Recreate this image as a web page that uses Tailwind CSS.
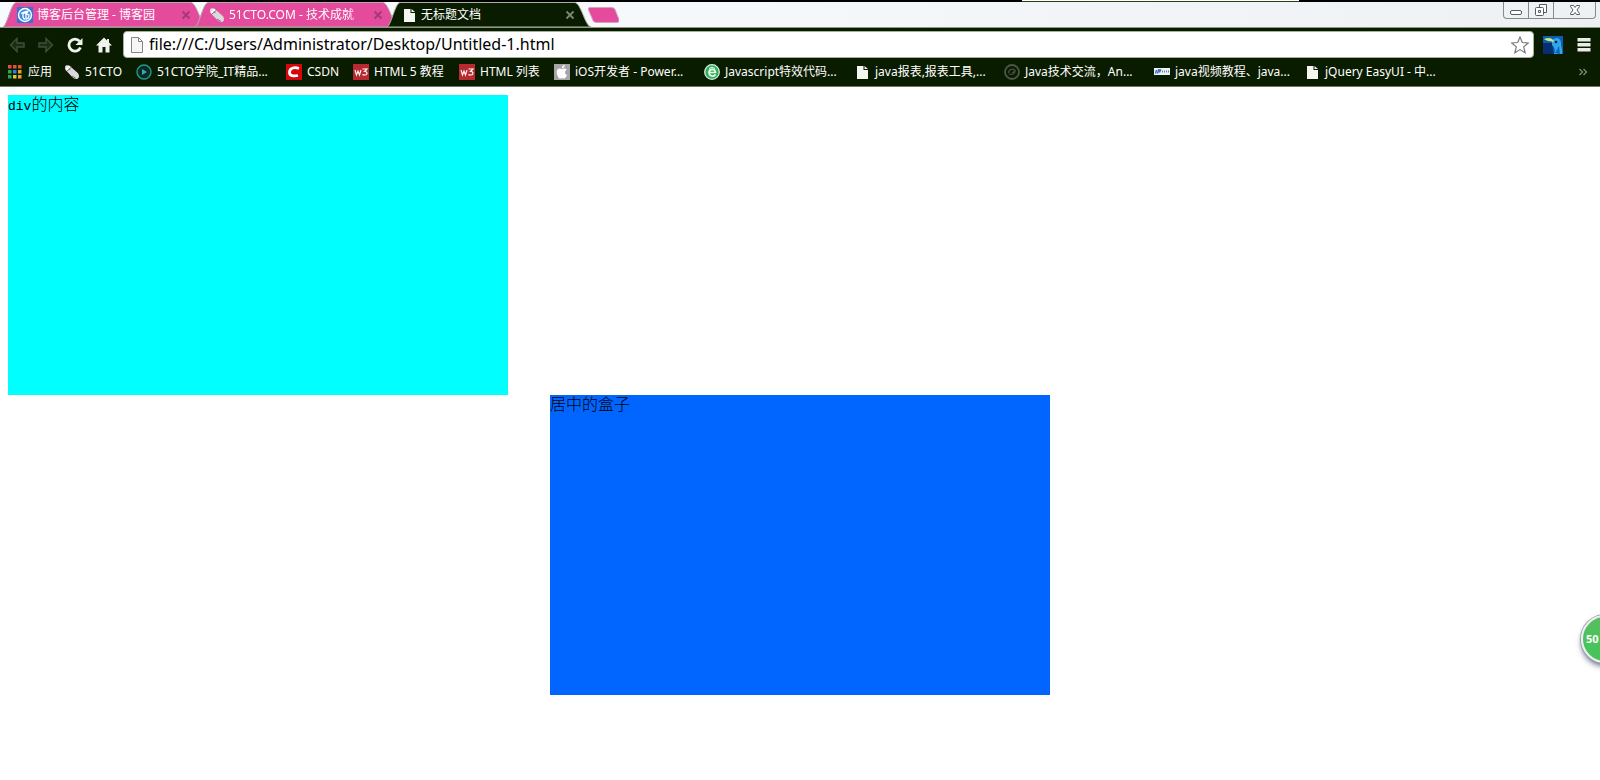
<!DOCTYPE html>
<html lang="zh-CN">
<head>
<meta charset="utf-8">
<title>无标题文档</title>
<script src="https://cdn.jsdelivr.net/npm/@tailwindcss/browser@4"></script>
</head>
<body class="relative min-h-screen overflow-hidden bg-white font-['Noto_Sans','Noto_Sans_CJK_SC',sans-serif] text-xs">
<svg class="hidden">
  <symbol id="file" viewBox="0 0 16 16"><path d="M3 2h6.500v4H14v9H3z" fill="#f4f6f0"/><path d="M10.500 2 14 5h-3.500z" fill="#f4f6f0"/></symbol>
  <symbol id="mouse" viewBox="0 0 16 16"><path d="M1 3c0-2 3-2.500 5-.8l7.500 6.600c2 2 2 5 0 6-1.500.8-3.500 0-5-1.500L2 6.500C1 5.500 1 4 1 3z" fill="#ddd8dc"/><path d="m1.500 5 1.800 2L7 3.300 5 1.600" fill="#fff"/><path d="m3 7 4.500-4M5 4.700l1.500 1.500M8 12l4 2.500" fill="none" stroke="#77716f"/></symbol>
  <symbol id="close" viewBox="0 0 10 10"><path d="m1.500 1.500 7 7m0-7-7 7" fill="none" stroke="currentColor" stroke-width="1.800"/></symbol>
  <symbol id="w3" viewBox="0 0 16 16"><path d="M0 0h16v16H0z" fill="#b92a30"/><path d="m2 6 1.500 5L5 7l1.500 4L8 6M9.500 5H14l-2.500 2.500C15 7.500 14.500 11 12 11c-1 0-2 0-2.500-.5" fill="none" stroke="#fff" stroke-width="1.100"/></symbol>
</svg>

<header>
  <div class="flex h-0.5 bg-black"><div class="ml-[63.9%] w-[17.3%] border-b border-[#23420f] bg-white"></div></div>
  <div class="flex h-[25px] items-start bg-linear-to-r from-[#f8fbfd] via-[#f5f8fb] to-[#eef1f3]">
    <nav class="flex h-full pl-[3px]" aria-label="标签页">
      <div class="relative isolate flex h-full w-[204px] items-center pr-4 pl-3.5 text-white">
        <svg class="absolute inset-0 -z-10 size-full" viewBox="0 0 204 25" preserveAspectRatio="none"><path d="M0 25C4 24 8 1 13 .5h175C194 1 198 24 204 25z" fill="#e44b9d" stroke="#b5a8b2"/></svg>
        <svg class="mr-1 size-4 shrink-0" viewBox="0 0 16 16"><path d="M0 0h16v16H0z" fill="#2f76d2"/><circle cx="8" cy="8" r="6.500" fill="#3f8ce5" stroke="#fff" stroke-width="1.400"/><path d="M4 6.500 7 5l4-1-1 2H6v3c0 2 1 3 2 3m1-6v6c2 0 3-2 3-4L9 7" fill="none" stroke="#fff" stroke-width="1.300"/></svg>
        <span class="min-w-0 flex-1 overflow-hidden whitespace-nowrap">博客后台管理 - 博客园</span>
        <button aria-label="关闭" class="text-[#a03a75]"><svg class="size-2.5"><use href="#close"/></svg></button>
      </div>
      <div class="relative isolate -ml-3 flex h-full w-[204px] items-center pr-4 pl-3.5 text-white">
        <svg class="absolute inset-0 -z-10 size-full" viewBox="0 0 204 25" preserveAspectRatio="none"><path d="M0 25C4 24 8 1 13 .5h175C194 1 198 24 204 25z" fill="#e44b9d" stroke="#b5a8b2"/></svg>
        <svg class="mr-1 size-4 shrink-0"><use href="#mouse"/></svg>
        <span class="mr-1 min-w-0 flex-1 overflow-hidden mask-r-from-85% whitespace-nowrap">51CTO.COM - 技术成就</span>
        <button aria-label="关闭" class="text-[#a03a75]"><svg class="size-2.5"><use href="#close"/></svg></button>
      </div>
      <div class="relative isolate -ml-3 flex h-full w-[204px] items-center pr-4 pl-3.5 text-white">
        <svg class="absolute inset-0 -z-10 size-full" viewBox="0 0 204 25" preserveAspectRatio="none"><path d="M0 25C4 24 8 1 13 .5h175C194 1 198 24 204 25z" fill="#0a1c00" stroke="#a9b3a4"/></svg>
        <svg class="mr-1 size-4 shrink-0"><use href="#file"/></svg>
        <span class="min-w-0 flex-1 overflow-hidden whitespace-nowrap">无标题文档</span>
        <button aria-label="关闭" class="text-[#7d8479]"><svg class="size-2.5"><use href="#close"/></svg></button>
      </div>
      <button aria-label="新标签页" class="-ml-1"><svg class="h-4 w-8" viewBox="0 0 32 16"><path d="M3 .5h22q2 0 3 2l4 10q1 3-2 3H9q-2 0-3-2L1.500 3Q.5.500 3 .5z" fill="#e44b9d" stroke="#d5a5c0"/></svg></button>
    </nav>
    <div class="mr-1 ml-auto flex h-[17px] rounded-b border border-t-0 border-[#858a90] text-[#555b63]">
      <button aria-label="最小化" class="flex w-[25px] justify-center border-r border-[#858a90]"><svg class="h-4 w-3.5" viewBox="0 0 14 16"><rect x="1.500" y="8.500" width="11" height="4" rx="1.500" fill="#fff" stroke="currentColor"/></svg></button>
      <button aria-label="还原" class="flex w-[25px] justify-center border-r border-[#858a90]"><svg class="h-4 w-3.5" viewBox="0 0 14 16"><path d="M5.500 5V2.500h7v8H10" fill="#fff" stroke="currentColor"/><rect x="1.500" y="5.500" width="8" height="8" rx="1" fill="#fff" stroke="currentColor"/><path d="M4.500 8.500h2v2h-2z" fill="none" stroke="currentColor"/></svg></button>
      <button aria-label="关闭窗口" class="flex w-[41px] justify-center"><svg class="h-4 w-3.5" viewBox="0 0 14 16"><path d="M2.500 3.500h3L7 5.500l1.500-2h3v1L9 8l2.500 3.500v1h-3L7 10.500l-1.500 2h-3v-1L5 8 2.500 4.500z" fill="#fff" stroke="currentColor"/></svg></button>
    </div>
  </div>

  <div class="border-t border-[#8d9887] bg-[#0a1c00] text-white">
    <div class="flex items-center gap-[13px] pt-[3px] pl-[9px] pr-2">
      <button aria-label="后退" class="text-[#3f4d38]"><svg class="size-4" viewBox="0 0 16 16"><path d="M8 1.500 1.500 8 8 14.500V10h7V6H8z" fill="#1d2d14" stroke="currentColor" stroke-width="1.500"/></svg></button>
      <button aria-label="前进" class="text-[#3f4d38]"><svg class="size-4" viewBox="0 0 16 16"><path d="M8 1.500 14.500 8 8 14.500V10H1V6h7z" fill="#1d2d14" stroke="currentColor" stroke-width="1.500"/></svg></button>
      <button aria-label="重新加载"><svg class="size-4" viewBox="0 0 16 16"><path d="M12.500 4.200A6 6 0 1 0 13.500 10.500" fill="none" stroke="#f0f3ed" stroke-width="2.800"/><path d="M15.500 1v7H8.500z" fill="#f0f3ed"/></svg></button>
      <button aria-label="主页"><svg class="size-4" viewBox="0 0 16 16"><path d="M8 .5 0 8.500h2.500v7h4V10h3v5.500h4v-7H16l-3-3V2h-2v1.500z" fill="#f0f3ed"/></svg></button>
      <div class="-ml-0.5 flex h-[27px] min-w-0 flex-1 items-center rounded-sm border border-[#a3b09b] bg-white pr-1 pl-[5px]">
        <svg class="size-4 shrink-0" viewBox="0 0 16 16"><path d="M2.500.5h7l4 4v11h-11zM9.500.5v4h4" fill="#f6f6f6" stroke="#858585"/></svg>
        <input aria-label="地址" value="file:///C:/Users/Administrator/Desktop/Untitled-1.html" class="ml-1 h-6 min-w-0 flex-1 bg-transparent pb-0.5 text-base text-black outline-none">
        <button aria-label="添加书签"><svg class="size-[18px]" viewBox="0 0 18 18"><path d="m9 1 2.300 5.500 6 .5-4.600 3.900 1.500 5.900L9 13.600l-5.200 3.200 1.500-5.900L.7 7l6-.5z" fill="#fff" stroke="#777b80" stroke-width="1.200"/></svg></button>
      </div>
      <button aria-label="扩展程序" class="-ml-1"><svg class="size-5" viewBox="0 0 20 20"><path d="M0 1h20v18H0z" fill="#0d5cb4"/><path d="M0 8h9l2 11H0z" fill="#062f72"/><path d="M9 6c3-5 9-3 9 2 0 4 2 7 1 11h-8c2-5 0-7-2-9z" fill="#31a6e8"/><path d="M1 4c5-2 9-1 10 3-3-1-6 0-10-3z" fill="#cee878"/><circle cx="13" cy="7" r="1.300" fill="#072446"/><path d="m12 18 4-7 1 8z" fill="#0869bd"/></svg></button>
      <button aria-label="菜单"><svg class="size-4" viewBox="0 0 16 16"><path d="M1.500 1h13v3.500h-13zm0 5h13v3.500h-13zm0 5h13v3.500h-13z" fill="#e9ece5"/></svg></button>
    </div>
    <nav aria-label="书签" class="flex h-[29px] items-center border-b border-[#6d7868] pl-[7px] leading-4 whitespace-nowrap">
      <a href="#" class="flex w-[57px] shrink-0 items-center gap-[5px]"><svg class="size-4 shrink-0" viewBox="0 0 16 16"><path d="M1 1h3.500v3.500H1zm5 0h3.500v3.500H6zm5 0h3.500v3.500H11z" fill="#e25336"/><path d="M1 6h3.500v3.500H1z" fill="#2fa45b"/><path d="M6 6h3.500v3.500H6z" fill="#317fe0"/><path d="M11 6h3.500v3.500H11zm0 5h3.500v3.500H11z" fill="#e7a52e"/><path d="M1 11h3.500v3.500H1z" fill="#2fa45b"/><path d="M6 11h3.500v3.500H6z" fill="#e7c52e"/></svg>应用</a>
      <a href="#" class="flex w-[72px] shrink-0 items-center gap-[5px]"><svg class="size-4 shrink-0"><use href="#mouse"/></svg>51CTO</a>
      <a href="#" class="flex w-[150px] shrink-0 items-center gap-[5px]"><svg class="size-4 shrink-0" viewBox="0 0 16 16"><circle cx="8" cy="8" r="7" fill="#082b27" stroke="#25968b" stroke-width="1.400"/><path d="m6 5 5 3-5 3z" fill="#39aaa0"/></svg>51CTO学院_IT精品...</a>
      <a href="#" class="flex w-[67px] shrink-0 items-center gap-[5px]"><svg class="size-4 shrink-0" viewBox="0 0 16 16"><path d="M0 0h16v16H0z" fill="#d3070c"/><path d="M13 4.500C9 3 4 3.500 3.500 8c-.3 4 4 4.500 8.500 3.500" fill="none" stroke="#fff" stroke-width="2.800"/></svg>CSDN</a>
      <a href="#" class="flex w-[106px] shrink-0 items-center gap-[5px]"><svg class="size-4 shrink-0"><use href="#w3"/></svg>HTML 5 教程</a>
      <a href="#" class="flex w-[95px] shrink-0 items-center gap-[5px]"><svg class="size-4 shrink-0"><use href="#w3"/></svg>HTML 列表</a>
      <a href="#" class="flex w-[150px] shrink-0 items-center gap-[5px]"><svg class="size-4 shrink-0" viewBox="0 0 16 16"><path d="M0 0h16v16H0z" fill="#a5a5a7"/><path d="M8 5C5 3.500 2.500 5 2.700 8.500 3 12 5 15 6.500 14.500c1-.5 2-.5 3 0 1.500.5 3-2 3.500-3.500-2.500-1-2.500-4-.2-5.200C11.500 4 9.500 4.300 8 5zm0-.7C7.800 2.500 9 1 10.800 1 11 2.800 9.500 4.300 8 4.300z" fill="#fff"/></svg>iOS开发者 - Power...</a>
      <a href="#" class="flex w-[150px] shrink-0 items-center gap-[5px]"><svg class="size-4 shrink-0" viewBox="0 0 16 16"><circle cx="8" cy="8" r="7.300" fill="#33ad5a" stroke="#d1edda" stroke-width="1.300"/><path d="M11.500 10.500C10 13 5 12.500 5 8.500s6-4.500 6.500 0H5" fill="none" stroke="#e6ffed" stroke-width="1.700"/><path d="M5 4.500q3-2.500 6 0" fill="none" stroke="#d9ffe4"/></svg>Javascript特效代码...</a>
      <a href="#" class="flex w-[150px] shrink-0 items-center gap-[5px]"><svg class="size-4 shrink-0"><use href="#file"/></svg>java报表,报表工具,...</a>
      <a href="#" class="flex w-[150px] shrink-0 items-center gap-[5px]"><svg class="size-4 shrink-0" viewBox="0 0 16 16"><circle cx="8" cy="8" r="7" fill="none" stroke="#4d5549" stroke-width="1.800"/><path d="M4.500 9c0-4 5-5 7-2M5 10c3 1 6 0 6-3L8 9" fill="none" stroke="#454d40" stroke-width="1.300"/></svg>Java技术交流，An...</a>
      <a href="#" class="flex w-[150px] shrink-0 items-center gap-[5px]"><svg class="size-4 shrink-0" viewBox="0 0 16 16"><path d="M0 4h16v7H0z" fill="#edf3fa"/><path d="M1.500 9.500 2.500 6m1 3.500L4.500 6h2l-1 2.500" fill="none" stroke="#2865ab" stroke-width="1.300"/><path d="M8.500 6.500v2m2-2v2m2-2v2m2-2v2" stroke="#6182a6"/></svg>java视频教程、java...</a>
      <a href="#" class="flex w-[150px] shrink-0 items-center gap-[5px]"><svg class="size-4 shrink-0"><use href="#file"/></svg>jQuery EasyUI - 中...</a>
      <button aria-label="更多书签" class="mr-3 ml-auto text-[#7e8779]"><svg class="size-2.5" viewBox="0 0 10 10"><path d="m1.500 2 3 3-3 3m4-6 3 3-3 3" fill="none" stroke="currentColor" stroke-width="1.300"/></svg></button>
    </nav>
  </div>
</header>

<main class="p-2 font-['Noto_Sans_CJK_SC',sans-serif] text-base leading-4 font-light text-black">
  <div class="h-[300px] w-[500px] bg-[#00ffff]"><span class="font-['Liberation_Mono',monospace] text-[13px]">div</span>的内容</div>
  <div class="mx-auto h-[300px] w-[500px] bg-[#0066ff]">居中的盒子</div>
</main>

<button class="absolute top-[615px] -right-[29px] size-12 rounded-full border-2 border-[#eee] bg-linear-to-b from-[#57bd61] to-[#42c65a] pl-[3px] text-left text-[11px] font-bold text-white shadow-md ring-1 shadow-gray-500 ring-gray-400">50</button>
</body>
</html>
